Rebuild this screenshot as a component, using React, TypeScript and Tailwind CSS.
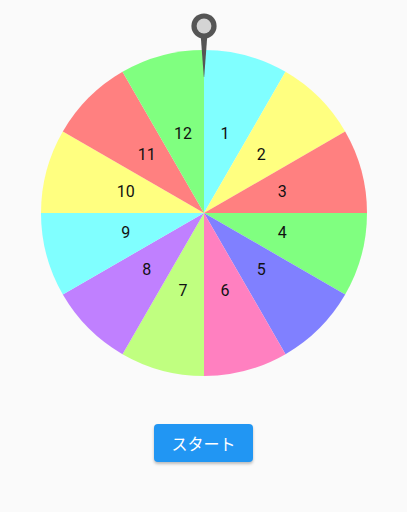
const colors = [
  "#80ffff",
  "#ffff80",
  "#ff8080",
  "#80ff80",
  "#8080ff",
  "#ff80c0",
  "#c0ff80",
  "#c080ff",
  "#80ffff",
  "#ffff80",
  "#ff8080",
  "#80ff80",
];

const R = 163;

function pt(deg: number, r: number) {
  const a = (deg * Math.PI) / 180;
  return [R + r * Math.sin(a), R - r * Math.cos(a)];
}

function Wheel() {
  return (
    <svg width={R * 2} height={R * 2} viewBox={`0 0 ${R * 2} ${R * 2}`}>
      {colors.map((c, i) => {
        const [x1, y1] = pt(i * 30, R);
        const [x2, y2] = pt((i + 1) * 30, R);
        return (
          <path
            key={i}
            d={`M${R} ${R} L${x1} ${y1} A${R} ${R} 0 0 1 ${x2} ${y2} Z`}
            fill={c}
          />
        );
      })}
      {colors.map((_, i) => {
        const [x, y] = pt(i * 30 + 15, 81);
        return (
          <text
            key={i}
            x={x}
            y={y - 1}
            textAnchor="middle"
            dominantBaseline="central"
            fontSize={16}
            fontFamily="Roboto, 'Noto Sans', sans-serif"
            fill="#111111"
          >
            {i + 1}
          </text>
        );
      })}
    </svg>
  );
}

function Pointer() {
  return (
    <svg width="28" height="66" viewBox="0 0 28 66">
      <path d="M10.5 20 L17.5 20 L14.2 64 L13.8 64 Z" fill="#555555" />
      <circle cx="14" cy="13" r="12.6" fill="#555555" />
      <circle cx="14" cy="13" r="7.4" fill="#d4d4d4" />
    </svg>
  );
}

export default function App() {
  return (
    <div className="min-h-screen bg-[#fafafa] flex flex-col items-center">
      <div className="relative mt-[50px] w-[326px] h-[326px]">
        <Wheel />
        <div className="absolute top-[-37px] left-1/2 -translate-x-1/2">
          <Pointer />
        </div>
      </div>
      <button className="mt-[48px] w-[99px] h-[38px] rounded-[4px] bg-[#2196f3] text-white text-[16px] shadow-[0_2px_3px_rgba(0,0,0,0.25)] font-['Noto_Sans_CJK_JP',sans-serif]">
        スタート
      </button>
    </div>
  );
}
